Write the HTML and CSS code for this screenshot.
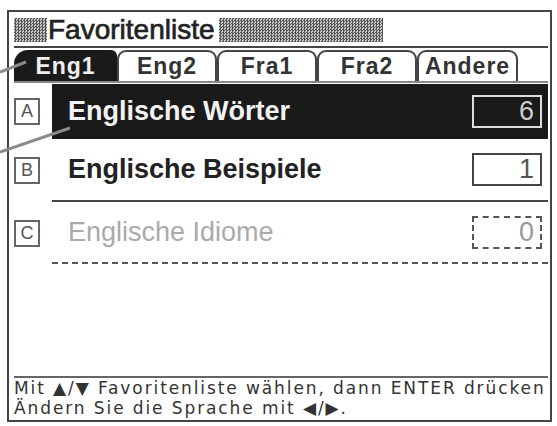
FILE: index.html
```html
<!DOCTYPE html>
<html lang="de">
<head>
    <meta charset="UTF-8">
    <title>Favoritenliste</title>
    <link rel="stylesheet" href="styles.css">
</head>
<body>
    <div class="screen">
        <div class="title-row">
            <span class="hatch hatch-left"></span>
            <span class="title">Favoritenliste</span>
            <span class="hatch hatch-right"></span>
        </div>

        <div class="tabs">
            <div class="tab active">Eng1</div>
            <div class="tab">Eng2</div>
            <div class="tab">Fra1</div>
            <div class="tab">Fra2</div>
            <div class="tab tab-last">Andere</div>
        </div>

        <div class="list">
            <div class="item item-a">
                <div class="key"><span>A</span></div>
                <div class="item-main selected">
                    <span class="label">Englische Wörter</span>
                    <span class="count">6</span>
                </div>
            </div>
            <div class="item item-b">
                <div class="key"><span>B</span></div>
                <div class="item-main">
                    <span class="label">Englische Beispiele</span>
                    <span class="count">1</span>
                </div>
            </div>
            <div class="item item-c">
                <div class="key"><span>C</span></div>
                <div class="item-main empty">
                    <span class="label">Englische Idiome</span>
                    <span class="count">0</span>
                </div>
            </div>
        </div>

        <div class="spacer"></div>

        <div class="help">
            <div>Mit ▲/▼ Favoritenliste wählen, dann ENTER drücken</div>
            <div>Ändern Sie die Sprache mit ◀/▶.</div>
        </div>
    </div>

    <!-- Hinweislinien aus der Anleitung -->
    <svg class="callouts" width="557" height="426" viewBox="0 0 557 426">
        <line x1="0" y1="72" x2="26" y2="62" />
        <line x1="0" y1="152" x2="70" y2="128" />
    </svg>
</body>
</html>
```

FILE: styles.css
```css
body {
    margin: 0;
    background-color: #fff;
    color: #222;
    font-family: "Liberation Sans", Arial, sans-serif;
}
.screen {
    box-sizing: border-box;
    width: 545px;
    height: 412px;
    margin: 10px 0 0 7px;
    padding: 2px 2px 2px 5px;
    border: 2px solid #444;
    display: flex;
    flex-direction: column;
}
.title-row {
    height: 32px;
    border-bottom: 2px solid #444;
    display: flex;
    align-items: center;
}
.hatch {
    height: 24px;
    background: repeating-conic-gradient(#555 0 25%, #c8c8c8 0 50%) 0 0 / 3px 3px;
}
.hatch-left {
    width: 33px;
    margin-right: 1px;
}
.hatch-right {
    width: 164px;
    margin-left: 4px;
}
.title {
    font-size: 28px;
    line-height: 32px;
    color: #222;
    -webkit-text-stroke: 0.7px #222;
}
.tabs {
    margin-top: 2px;
    height: 31px;
    border-bottom: 2px solid #888;
    display: flex;
}
.tab {
    box-sizing: border-box;
    width: 100px;
    border: 2px solid #444;
    border-bottom: none;
    border-radius: 9px 9px 0 0;
    font-size: 23px;
    font-weight: bold;
    letter-spacing: 1px;
    line-height: 29px;
    text-align: center;
    color: #333;
}
.tab.active {
    width: 103px;
    background-color: #1a1a1a;
    border-color: #1a1a1a;
    border-radius: 14px 6px 0 0;
    color: #eee;
}
.tab-last {
    width: 101px;
}
.list {
    margin-top: 1px;
}
.item {
    display: flex;
}
.item-a {
    height: 55px;
}
.item-b {
    height: 63px;
}
.item-c {
    height: 62px;
}
.key {
    width: 38px;
    display: flex;
    align-items: center;
}
.key span {
    box-sizing: border-box;
    width: 26px;
    height: 27px;
    border: 2px solid #666;
    font-size: 18px;
    line-height: 23px;
    text-align: center;
    color: #555;
}
.item-main {
    flex: 1;
    padding: 0 6px 0 16px;
    display: flex;
    align-items: center;
    justify-content: space-between;
    border-bottom: 2px solid #444;
}
.item-a .item-main {
    border-bottom: none;
}
.item-main.selected {
    background-color: #1a1a1a;
    color: #f2f2f2;
}
.item-main.empty {
    border-bottom: 2px dashed #555;
    color: #aaa;
}
.label {
    font-size: 27px;
    font-weight: bold;
}
.empty .label {
    font-weight: normal;
}
.count {
    box-sizing: border-box;
    width: 70px;
    height: 33px;
    border: 2px solid #444;
    padding-right: 6px;
    font-size: 27px;
    line-height: 29px;
    text-align: right;
    color: #555;
}
.selected .count {
    border-color: #ddd;
    color: #ccc;
}
.empty .count {
    border: 2px dashed #555;
    color: #999;
}
.spacer {
    flex: 1;
}
.help {
    border-top: 2px solid #666;
    font-family: "DejaVu Sans", sans-serif;
    font-size: 17px;
    letter-spacing: 1.9px;
    line-height: 20px;
    color: #333;
    white-space: nowrap;
}
.callouts {
    position: absolute;
    top: 0;
    left: 0;
    pointer-events: none;
}
.callouts line {
    stroke: #8a8a8a;
    stroke-width: 3;
}
```
